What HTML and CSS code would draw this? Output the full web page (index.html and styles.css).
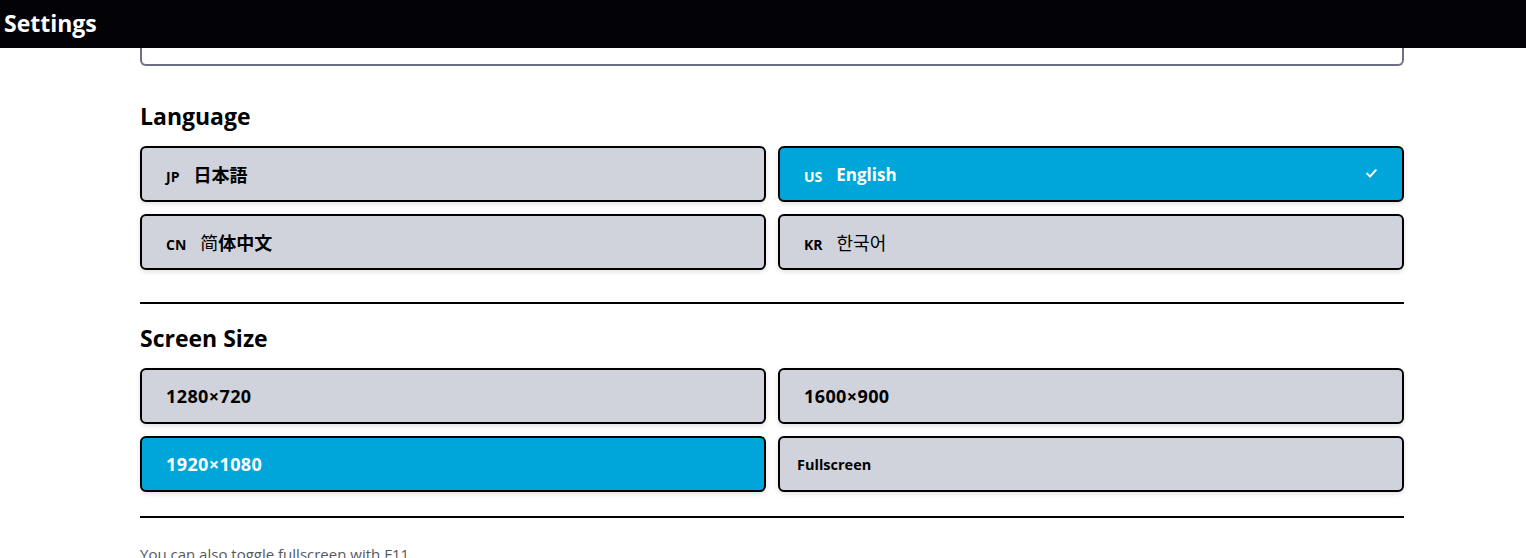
FILE: index.html
```html
<!DOCTYPE html>
<html lang="en">
<head>
<meta charset="utf-8">
<title>Settings</title>
<link rel="stylesheet" href="styles.css">
</head>
<body>
<header class="topbar">
  <h1 class="topbar-title">Settings</h1>
  <button class="topbar-close" aria-label="Close">×</button>
</header>
<main class="content">
  <div class="prev-box"></div>

  <section class="section">
    <h2 class="section-title">Language</h2>
    <div class="option-grid">
      <button class="option"><span class="tag">JP</span><span class="label">日本語</span></button>
      <button class="option option--active"><span class="tag">US</span><span class="label label--latin">English</span><svg class="check" width="11" height="9" viewBox="0 0 11 9"><polyline points="1.2,4.6 4,7.6 9.8,1.2" fill="none" stroke="#fff" stroke-width="2" stroke-linecap="round" stroke-linejoin="round"/></svg></button>
      <button class="option"><span class="tag">CN</span><span class="label"><span class="thin">简</span>体中文</span></button>
      <button class="option"><span class="tag">KR</span><span class="label label--kr">한국어</span></button>
    </div>
  </section>

  <hr class="divider">

  <section class="section">
    <h2 class="section-title">Screen Size</h2>
    <div class="option-grid">
      <button class="option"><span class="label label--num">1280×720</span></button>
      <button class="option"><span class="label label--num">1600×900</span></button>
      <button class="option option--active"><span class="label label--num">1920×1080</span></button>
      <button class="option option--small"><span class="label">Fullscreen</span></button>
    </div>
  </section>

  <hr class="divider divider--tight">

  <p class="note">You can also toggle fullscreen with F11</p>
</main>
</body>
</html>
```

FILE: styles.css
```css
* { box-sizing: border-box; }
html, body { margin: 0; padding: 0; }
body {
  background: #ffffff;
  font-family: "Open Sans", "Noto Sans", "Noto Sans CJK JP", sans-serif;
  color: #000;
  overflow: hidden;
}

.topbar {
  height: 48px;
  background: #030207;
  display: flex;
  align-items: center;
  justify-content: space-between;
  overflow: hidden;
}
.topbar-title {
  margin: 0 0 3px 4px;
  color: #fff;
  font-size: 23px;
  font-weight: 700;
}
.topbar-close {
  background: none;
  border: none;
  color: #fff;
  font-size: 22px;
  padding: 0;
  margin-right: -12px;
  font-family: inherit;
}

.content {
  width: 1264px;
  margin-left: 140px;
}

.prev-box {
  height: 18px;
  border: 2px solid #6d7083;
  border-top: none;
  border-radius: 0 0 6px 6px;
}

.section { margin-top: 34px; }
.divider + .section { margin-top: 18px; }

.section-title {
  margin: 0 0 14px;
  font-size: 23px;
  line-height: 32px;
  font-weight: 700;
}

.option-grid {
  display: grid;
  grid-template-columns: 1fr 1fr;
  gap: 12px;
}

.option {
  height: 56px;
  display: flex;
  align-items: center;
  gap: 14px;
  padding: 0 24px;
  background: #d1d3dc;
  border: 2px solid #000;
  border-radius: 6px;
  box-shadow: 0 2px 5px rgba(0, 0, 0, 0.12);
  font-family: inherit;
  color: #000;
  text-align: left;
}
.option--active {
  background: #00a6d9;
  color: #fff;
}
.option--small { padding-left: 17px; }
.option--small .label { font-size: 14.5px; }

.tag {
  font-size: 14px;
  font-weight: 700;
  margin-top: 4px;
}
.label {
  font-size: 18px;
  font-weight: 700;
}
.label--latin { font-size: 17px; }
.label--num { letter-spacing: 0.4px; }
.label--kr { font-weight: 400; font-family: "Noto Sans CJK KR", sans-serif; }
.thin { font-weight: 400; }
.check {
  margin-left: auto;
  margin-right: 1px;
  margin-top: -2px;
}

.divider {
  margin: 32px 0 0;
  border: none;
  height: 2px;
  background: #000;
}
.divider--tight { margin-top: 24px; }

.note {
  margin: 26px 0 0;
  font-size: 15px;
  color: #555860;
}
```
